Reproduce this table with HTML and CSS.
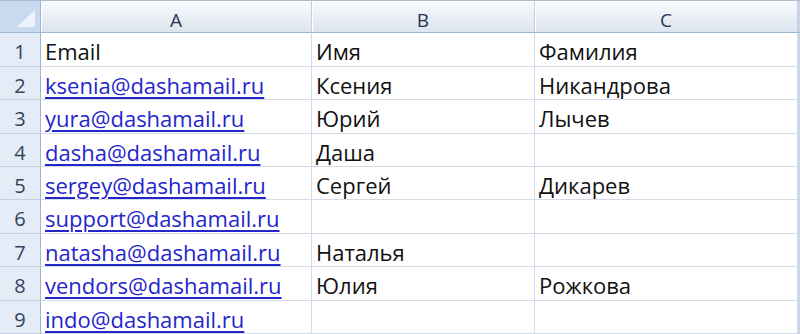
FILE: index.html
```html
<!DOCTYPE html>
<html lang="ru">
<head>
<meta charset="utf-8">
<title>Sheet</title>
<link rel="stylesheet" href="styles.css">
</head>
<body>
<div class="sheet">
  <div class="corner"><span class="tri"></span></div>
  <div class="colhead">A</div>
  <div class="colhead">B</div>
  <div class="colhead">C</div>
  <div class="edge head-edge"></div>

  <div class="rowhead">1</div>
  <div class="cell">Email</div>
  <div class="cell">Имя</div>
  <div class="cell">Фамилия</div>
  <div class="edge"></div>

  <div class="rowhead">2</div>
  <div class="cell"><a class="link" href="#">ksenia@dashamail.ru</a></div>
  <div class="cell">Ксения</div>
  <div class="cell">Никандрова</div>
  <div class="edge"></div>

  <div class="rowhead">3</div>
  <div class="cell"><a class="link" href="#">yura@dashamail.ru</a></div>
  <div class="cell">Юрий</div>
  <div class="cell">Лычев</div>
  <div class="edge"></div>

  <div class="rowhead">4</div>
  <div class="cell"><a class="link" href="#">dasha@dashamail.ru</a></div>
  <div class="cell">Даша</div>
  <div class="cell"></div>
  <div class="edge"></div>

  <div class="rowhead">5</div>
  <div class="cell"><a class="link" href="#">sergey@dashamail.ru</a></div>
  <div class="cell">Сергей</div>
  <div class="cell">Дикарев</div>
  <div class="edge"></div>

  <div class="rowhead">6</div>
  <div class="cell"><a class="link" href="#">support@dashamail.ru</a></div>
  <div class="cell"></div>
  <div class="cell"></div>
  <div class="edge"></div>

  <div class="rowhead">7</div>
  <div class="cell"><a class="link" href="#">natasha@dashamail.ru</a></div>
  <div class="cell">Наталья</div>
  <div class="cell"></div>
  <div class="edge"></div>

  <div class="rowhead">8</div>
  <div class="cell"><a class="link" href="#">vendors@dashamail.ru</a></div>
  <div class="cell">Юлия</div>
  <div class="cell">Рожкова</div>
  <div class="edge"></div>

  <div class="rowhead">9</div>
  <div class="cell"><a class="link" href="#">indo@dashamail.ru</a></div>
  <div class="cell"></div>
  <div class="cell"></div>
  <div class="edge"></div>
</div>
</body>
</html>
```
FILE: styles.css
```css
html, body {
  margin: 0;
  padding: 0;
  background: #ffffff;
}
body {
  width: 800px;
  height: 334px;
  overflow: hidden;
  font-family: "Open Sans", "Liberation Sans", Arial, sans-serif;
}
.sheet {
  display: grid;
  grid-template-columns: 41px 271px 223px 263px 2px;
  grid-template-rows: repeat(10, 33.4px);
  width: 800px;
}
.corner {
  position: relative;
  background: #c9d9ef;
  border-top: 1px solid #a9bad0;
  border-right: 1px solid #9eb6ce;
  border-bottom: 1px solid #9eb6ce;
}
.tri {
  position: absolute;
  right: 5px;
  bottom: 5px;
  width: 0;
  height: 0;
  border-left: 18px solid transparent;
  border-bottom: 17px solid #eef3fa;
}
.colhead {
  display: flex;
  justify-content: center;
  align-items: flex-start;
  padding-top: 9px;
  font-size: 19px;
  line-height: 20px;
  color: #26364f;
  background: linear-gradient(#f9fbfd, #e9eef5 55%, #dde4ee);
  border-top: 1px solid #b0bccc;
  border-right: 1px solid #c3cfde;
  border-bottom: 1px solid #9eb6ce;
  box-shadow: inset 1px 0 0 #ffffff;
}
.head-edge {
  background: #c5d3e6;
  border-top: 1px solid #b0bccc;
  border-bottom: 1px solid #9eb6ce;
}
.edge {
  background: #c9d6e8;
}
.rowhead {
  display: flex;
  justify-content: center;
  align-items: flex-start;
  padding-top: 8px;
  font-size: 20px;
  line-height: 22px;
  color: #34435a;
  background: #e4ecf7;
  border-right: 1px solid #9eb6ce;
  border-bottom: 1px solid #c5d2e3;
}
.cell {
  padding: 6px 0 0 4px;
  font-size: 22px;
  line-height: 24px;
  color: #111111;
  white-space: nowrap;
  border-right: 1px solid #d4dbe7;
  border-bottom: 1px solid #d4dbe7;
}
.link {
  color: #2525cc;
  text-decoration: underline;
  text-underline-offset: 3px;
}
```
